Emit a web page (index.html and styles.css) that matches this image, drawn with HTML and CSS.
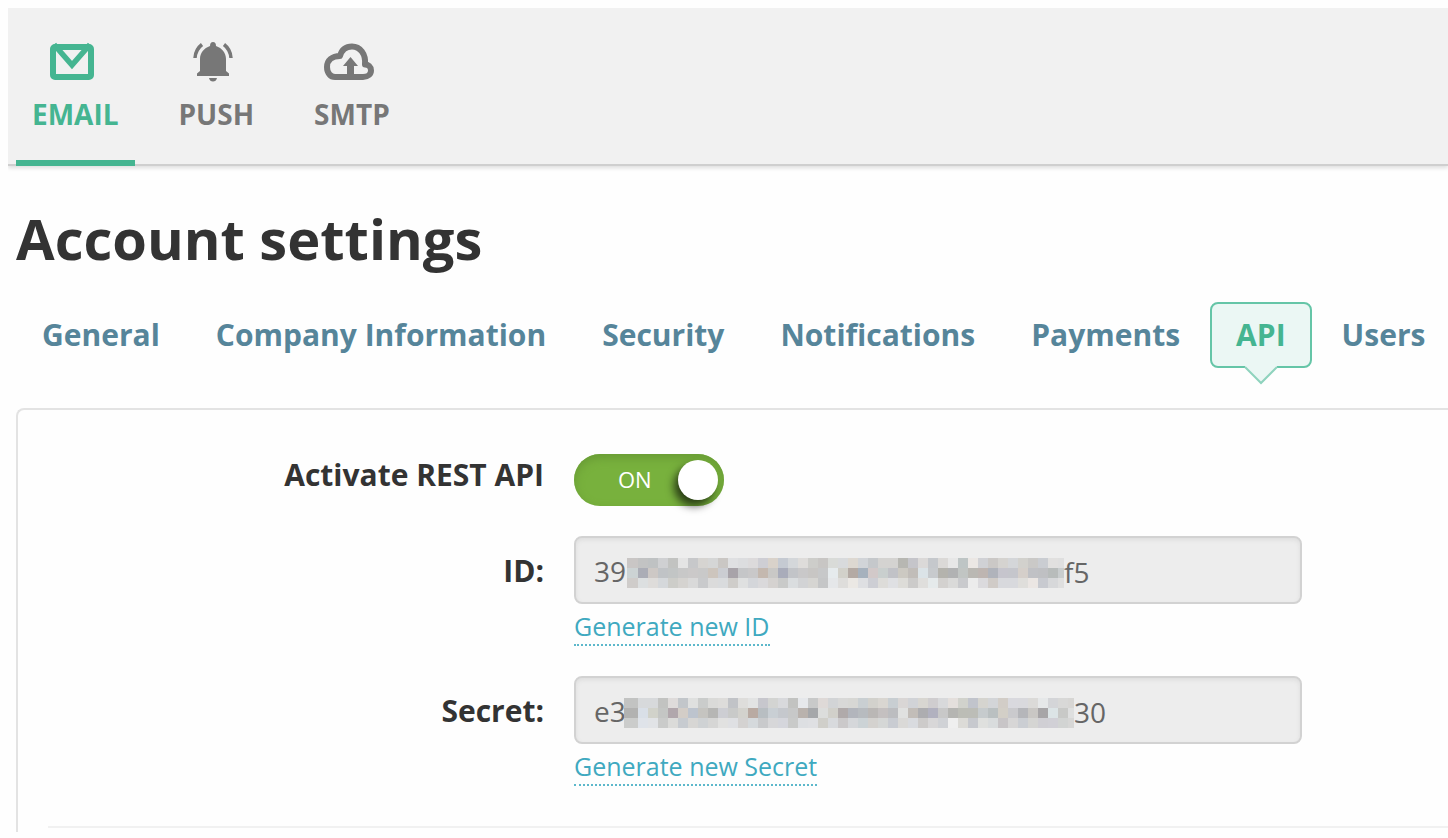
FILE: index.html
```html
<!DOCTYPE html>
<html lang="en">
<head>
<meta charset="utf-8">
<title>Account settings</title>
<link rel="stylesheet" href="styles.css">
</head>
<body>
<header class="topbar">
  <nav class="services" aria-label="Services">
    <a class="service service-active" href="#email">
      <svg class="service-icon" viewBox="0 0 52 44" aria-hidden="true">
        <rect x="7" y="7" width="38" height="30" rx="2" fill="none" stroke="currentColor" stroke-width="6"/>
        <path d="M8 4.500L26 25L44 4.500" fill="none" stroke="currentColor" stroke-width="5.500"/>
      </svg>
      <span>EMAIL</span>
    </a>
    <a class="service" href="#push">
      <svg class="service-icon" viewBox="0 0 52 44" aria-hidden="true">
        <path fill="currentColor" d="M26 2c2 0 3 1.500 3 4c6 2 10 7 10 13v12l3 2.500v2.500H10v-2.500l3-2.500V19c0-6 4-11 10-13c0-2.500 1-4 3-4zM22 38h8c-.5 2.500-2 3.500-4 3.500s-3.500-1-4-3.500z"/>
        <path d="M15 4.500Q8.500 9.500 8 18M37 4.500Q43.500 9.500 44 18" fill="none" stroke="currentColor" stroke-width="3.500"/>
      </svg>
      <span>PUSH</span>
    </a>
    <a class="service" href="#smtp">
      <svg class="service-icon" viewBox="0 0 52 44" aria-hidden="true">
        <path d="M12 37H40C45 37 48 34 48 30.500C48 26.500 45 24.500 42 24.500C43 14 37 6.500 29 6.500C22.500 6.500 18.500 10.500 17 16C9 16 4 20.500 4 27C4 33 7.500 37 12 37Z" fill="none" stroke="currentColor" stroke-width="6" stroke-linejoin="round"/>
        <path d="M27.500 17L35 26H31V36H24V26H20Z" fill="currentColor"/>
      </svg>
      <span>SMTP</span>
    </a>
  </nav>
</header>
<main class="page">
  <h1 class="title">Account settings</h1>
  <nav class="tabs" aria-label="Account settings">
    <a class="tab" href="#general">General</a>
    <a class="tab" href="#company">Company Information</a>
    <a class="tab" href="#security">Security</a>
    <a class="tab" href="#notifications">Notifications</a>
    <a class="tab" href="#payments">Payments</a>
    <a class="tab tab-active" href="#api" aria-current="page">API<svg class="tab-arrow" viewBox="0 0 34 20" aria-hidden="true"><path d="M1 0H33V2L17 18L1 2Z" fill="#ebf7f4"/><path d="M1 1L17 17L33 1" fill="none" stroke="#8fd3bd" stroke-width="2"/></svg></a>
    <a class="tab" href="#users">Users</a>
  </nav>
  <form class="panel">
    <div class="row">
      <label class="label label-toggle" for="rest">Activate REST API</label>
      <div class="toggle">
        <input class="toggle-input" id="rest" type="checkbox" checked>
        <span class="toggle-text" aria-hidden="true">ON</span>
      </div>
    </div>
    <div class="row">
      <label class="label" for="id">ID:</label>
      <div class="control">
        <div class="field">
          <input class="input" id="id" type="text" value="39" readonly>
          <div class="hidden-part hidden-id">
            <svg class="mosaic" data-mosaic="id" width="437" height="30" viewBox="627 0 437 30" aria-hidden="true"></svg>
            <span>f5</span>
          </div>
        </div>
        <a class="generate" href="#new-id">Generate new ID</a>
      </div>
    </div>
    <div class="row">
      <label class="label" for="secret">Secret:</label>
      <div class="control">
        <div class="field">
          <input class="input" id="secret" type="text" value="e3" readonly>
          <div class="hidden-part hidden-secret">
            <svg class="mosaic" data-mosaic="secret" width="450" height="30" viewBox="624 0 450 30" aria-hidden="true"></svg>
            <span>30</span>
          </div>
        </div>
        <a class="generate" href="#new-secret">Generate new Secret</a>
      </div>
    </div>
    <hr class="divider">
  </form>
</main>
<script src="mosaic.js"></script>
</body>
</html>
```
FILE: styles.css
```css
* { box-sizing: border-box; }

body {
  margin: 8px 0 0 8px;
  background: #fefefe;
  color: #333;
  font-family: "Open Sans", sans-serif;
  overflow-x: hidden;
}

a { text-decoration: none; }

.topbar {
  background: #f1f1f1;
  border-bottom: 2px solid #cfcfcf;
  box-shadow: 0 2px 4px #ddd;
  padding-left: 8px;
}

.services { display: flex; gap: 28px; }

.service {
  display: flex;
  flex-direction: column;
  align-items: center;
  height: 158px;
  padding: 32px 16px 0;
  margin-bottom: -2px;
  border-bottom: 6px solid transparent;
  color: #777;
  font-size: 28px;
  font-weight: 700;
  line-height: 36px;
}

.service-active { color: #45b591; border-color: #45b591; }

.service-icon {
  width: 52px;
  height: 44px;
  margin: 0 6px 12px 0;
}

.page { padding-left: 8px; }

.title {
  margin: 34px 0 0;
  font-size: 56px;
  line-height: 76px;
}

.tabs {
  display: flex;
  gap: 4px;
  margin-top: 26px;
  white-space: nowrap;
}

.tab {
  position: relative;
  padding: 10px 24px;
  border: 2px solid transparent;
  border-radius: 8px;
  color: #56859a;
  font-size: 30px;
  font-weight: 700;
  line-height: 42px;
}

.tab-active {
  border-color: #65c5a7;
  background: #ebf7f4;
  color: #45b591;
}

.tab-arrow {
  position: absolute;
  top: 62px;
  left: calc(50% - 17px);
  width: 34px;
  height: 20px;
}

.panel {
  display: grid;
  gap: 30px;
  margin-top: 40px;
  padding: 44px 0 4px 30px;
  border: solid #e3e3e3;
  border-width: 2px 0 0 2px;
  border-top-left-radius: 8px;
}

.row {
  display: grid;
  grid-template-columns: 496px minmax(0, 728px);
  gap: 30px;
}

.label {
  font-size: 30px;
  font-weight: 700;
  line-height: 70px;
  text-align: right;
}

.label-toggle { line-height: 42px; }

.toggle {
  position: relative;
  width: 150px;
  height: 52px;
}

.toggle-input {
  appearance: none;
  display: flex;
  align-items: center;
  justify-content: flex-end;
  width: 100%;
  height: 100%;
  margin: 0;
  padding: 0 6px;
  border-radius: 26px;
  background: #78b13d;
  box-shadow: inset 0 4px 10px #689b35;
}

.toggle-input::before {
  content: "";
  width: 40px;
  height: 40px;
  border-radius: 50%;
  background: #fff;
  box-shadow: -4px 6px 8px rgba(0, 0, 0, .65);
}

.toggle-input:not(:checked) { justify-content: flex-start; }

.toggle-text {
  position: absolute;
  top: 11px;
  left: 44px;
  color: #fff;
  font-size: 22px;
  line-height: 28px;
  pointer-events: none;
}

.control { height: 110px; }

.field { position: relative; }

.input, .hidden-part {
  color: #666;
  font: 28px/38px "Open Sans", sans-serif;
}

.input {
  display: block;
  width: 100%;
  height: 68px;
  padding: 2px 18px 0;
  border: 2px solid #d2d2d2;
  border-radius: 8px;
  background: #ededed;
  box-shadow: inset 0 2px 4px #ddd;
}

.hidden-part {
  position: absolute;
  top: 17px;
  display: flex;
  align-items: center;
  pointer-events: none;
}

.hidden-id { left: 53px; }
.hidden-secret { left: 50px; }

.mosaic { margin-top: 2px; }

.generate {
  display: inline-block;
  margin-top: 4px;
  border-bottom: 2px dotted #5cb8cb;
  color: #3fa9c0;
  font-size: 25px;
  line-height: 36px;
}

.divider {
  width: 100%;
  height: 2px;
  margin: 10px 0 0;
  border: 0;
  background: #f1f1f1;
}
```
FILE: mosaic.js
```js
// Rows of 10px cells that cover the hidden characters of each key.
const mosaics = {
  id: { start: 628, left: 627, right: 1064, rows: [
    "c9c6c5 c2c3c3 bfc2c3 cfd0d2 c2c3c1 e4e4e4 c7c8ca d6d4d1 d5d6d6 cac7c4 dfe0e2 dcdddf dcdadb ceced4 d9d2ca c5cad2 d4d7da dedcda cdcdca c8c6c4 d9dbd8 d8dadc ddd8d1 d1d4d8 c5c8cb d4d3d1 d4d3d1 b7b7b2 c5c5ca dbd9d8 c5c8cc dbd9d7 e7e7e7 bec5c5 ebe7e4 d0d1d5 cbc8c6 d5d3d0 d4d6d9 d2d1cd cac9c7 cacdd2 e1e0df dfdfdf",
    "ccd3d4 abadb6 cdc8c5 c0c3c6 c2c5c5 c8c8c8 cbc9c9 c9c9c9 cdc5bd cbcdd2 a8a3a9 c5c6c8 c9c8c9 c4b8af c9c8c6 a9acba c2c4c8 c9c8c9 c8c6c4 c7c8c9 e6ebed d2d1ca b4aaa4 a6b1bd d2c9c9 c9cfce c1c2c7 ccc9c2 c1bdb9 dbe3e7 c7cacd b4b3ad b1b2b3 c1c5c3 bab8b3 beb5b1 b0b3bb c6c5cd c5c6cc d5cfca c0c1c5 bfc0c3 b8bcbb c9cdce",
    "cfccca dcdfe0 dedcda d5d8db cdcdc9 d5d3d0 d9d9d9 c9cacc dbdbdb d9dbdd cfcdca dfe0e0 d4d6da dad9db d5d2d0 c9cac9 dadddf d2d3d5 d6d5d2 c5c6c7 e5e7e9 dedddb ebe8e4 dedfe2 cdced4 dddcd9 dfe0e3 dddcd8 cccbca dfdedc e5eaeb d3d1cf dadad9 c9cacd ececec dbdadd d0cbc7 d8d9dd d8d9dd dfdedb ebe6e3 c8cad0 d7d8da dfdfdf"
  ]},
  secret: { start: 628, left: 624, right: 1074, rows: [
    "c2c3c2 d7d9db d7d9db c2c3c1 dedbda c2c6ca dfe0df cacccb dadad8 dddcda c1c3c7 dedddb e2e3e3 c7c7cd d3d4d2 d8d9dc c2c3c1 e6e8eb c8c9c9 ded9d7 d2d4d6 d8d8d7 d7d7d4 c9cfd2 d2d1cc d9d6d1 c8ced2 d9d6d5 d1d3d7 d8d6d1 cfcdcf d8d9db e4dfdc d1d2cc c1c4cc d5d4cf d3d5d8 d2cdc7 d9d9de d9d9dd dbdad8 e6e8e9 d4d5d8 d8d8d7 d7d6d4",
    "b2b2b1 d9dfe7 d1d2ca c4c6c4 b1a7ac d3cdc7 bdc4ce c5c4c0 b6b6b4 cdced3 c9cac9 d3d2cd b9aaa2 b8bec2 c9cfd4 c5c8cd c7c8c8 b9b2ad a5a7aa dcdddc d1d0ca b0aaaa b2b5bc b7bbbf bab7b5 c4c0c0 bcbdc0 e0e1e0 c2bdb8 adadb0 b1b1bf c8c8c8 b5b5b2 bcbdb6 bcbdb7 c6cbcd bac0c1 d3cfc7 cacacd b5b6ba c9c7c4 a7a5a7 dce4e6 c8c9c7 dedfdf",
    "cbcccb dfe3e9 e1e3e6 cacbca dbdbd9 c7cbd0 d7d6d4 cfd2d4 d6d6d5 e1e1e0 dfe0e3 d4d2d1 d5d9dc c9cacc d7d7d9 d5d6dc c9cac9 dddfe2 dfe0e3 d0cfca d8dadd cbc9ca d5d7da ccd3d6 d4d2cf d5d7d6 c9ccd2 dad9d7 d9dbdf cdcbca d8d7d8 d0d2d6 efefef dcdbd7 c7c9ce dfe0de d9dcdd c8c5c7 d7d6d6 cbced3 d5d5d3 d0cfd4 d1d0d6 d2d4d3 d7d7d6"
  ]}
};

for (const svg of document.querySelectorAll("[data-mosaic]")) {
  const { start, left, right, rows } = mosaics[svg.dataset.mosaic];
  rows.forEach((row, y) => {
    row.split(" ").forEach((color, i) => {
      const cell = document.createElementNS("http://www.w3.org/2000/svg", "rect");
      const x = i === 0 ? left : start + i * 10;
      cell.setAttribute("x", x);
      cell.setAttribute("y", y * 10);
      cell.setAttribute("width", Math.min(start + i * 10 + 10, right) - x);
      cell.setAttribute("height", 10);
      cell.setAttribute("fill", "#" + color);
      svg.append(cell);
    });
  });
}
```
